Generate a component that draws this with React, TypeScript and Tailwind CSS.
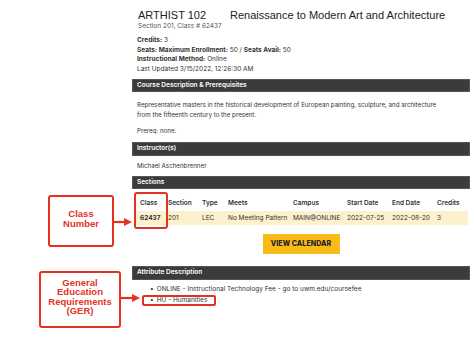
const body = { fontFamily: 'Inter, "Noto Sans", sans-serif' };
const arial = { fontFamily: '"Liberation Sans", Arial, sans-serif' };

function Bar({ title, className = '' }: { title: string; className?: string }) {
  return (
    <div
      className={`h-[13px] bg-[#3b3b3b] border border-[#555] text-white font-semibold text-[6.5px] leading-[11px] pl-[4px] ${className}`}
    >
      {title}
    </div>
  );
}

function Callout({ lines, className, leading }: { lines: string[]; className: string; leading: string }) {
  return (
    <div
      className={`absolute border-2 border-[#e4321f] rounded-[3px] bg-white flex flex-col items-center justify-center text-[#e4321f] font-bold text-[9.5px] text-center ${leading} ${className}`}
      style={arial}
    >
      {lines.map((l) => (
        <div key={l}>{l}</div>
      ))}
    </div>
  );
}

function Arrow({ className }: { className: string }) {
  return (
    <svg className={`absolute ${className}`} width="20" height="10" viewBox="0 0 20 10">
      <line x1="0" y1="5" x2="12" y2="5" stroke="#e4321f" strokeWidth="2.2" />
      <polygon points="11,1 19,5 11,9" fill="#e4321f" />
    </svg>
  );
}

const cols = 'grid grid-cols-[28px_34px_26px_65px_54px_45px_45px_1fr] pl-[6px] mx-[2px]';

export default function App() {
  return (
    <div className="relative w-[474px] h-[339px] overflow-hidden bg-white text-[#333]" style={body}>
      <div className="flex">
        <div className="w-[132px] shrink-0" />
        <div className="w-[338px]">
          <div className="mt-[8px] h-[14px] leading-[14px] pl-[6px] flex text-[11px] text-[#222]" style={arial}>
            <span className="w-[92px]">ARTHIST 102</span>
            <span>Renaissance to Modern Art and Architecture</span>
          </div>
          <div className="pl-[6px] text-[6.5px] leading-[9px] text-[#555]">Section 201, Class # 62437</div>

          <div className="mt-[5px] pl-[5px] text-[6.5px] leading-[9.6px]">
            <div>
              <b>Credits:</b> 3
            </div>
            <div>
              <b>Seats: Maximum Enrollment:</b> 50 / <b>Seats Avail:</b> 50
            </div>
            <div>
              <b>Instructional Method:</b> Online
            </div>
            <div>Last Updated 3/15/2022, 12:26:30 AM</div>
          </div>

          <Bar title="Course Description & Prerequisites" className="mt-[5px]" />
          <div className="mt-[8px] pl-[5px] text-[6.2px] leading-[10px]">
            <div>Representative masters in the historical development of European painting, sculpture, and architecture</div>
            <div>from the fifteenth century to the present.</div>
            <div className="mt-[6px]">Prereq: none.</div>
          </div>

          <Bar title="Instructor(s)" className="mt-[6px] h-[14px]" />
          <div className="mt-[5px] pl-[5px] text-[6.2px] leading-[10px]">Michael Aschenbrenner</div>

          <Bar title="Sections" className="mt-[5px]" />
          <div className="relative mt-[6px] text-[6.5px]">
            <div className={`${cols} h-[16px] items-center font-semibold`}>
              <span>Class</span>
              <span>Section</span>
              <span>Type</span>
              <span>Meets</span>
              <span>Campus</span>
              <span>Start Date</span>
              <span>End Date</span>
              <span>Credits</span>
            </div>
            <div className={`${cols} h-[14px] items-center bg-[#fdf0cd]`}>
              <span className="font-bold">62437</span>
              <span>201</span>
              <span>LEC</span>
              <span className="whitespace-nowrap">No Meeting Pattern</span>
              <span>MAIN@ONLINE</span>
              <span>2022-07-25</span>
              <span>2022-08-20</span>
              <span>3</span>
            </div>
            <div className="absolute left-[2px] top-[-3px] w-[34px] h-[37px] border-2 border-[#e4321f] rounded-[3px]" />
          </div>

          <div className="flex justify-center mt-[9px]">
            <div className="w-[77px] h-[20px] bg-[#f9bb17] flex items-center justify-center text-[7px] font-extrabold text-[#222] tracking-[0.1px]">
              VIEW CALENDAR
            </div>
          </div>

          <Bar title="Attribute Description" className="mt-[12px] h-[14px]" />
          <div className="relative mt-[4px] text-[6.5px] leading-[10.5px] pl-[18px]">
            <div>
              <span className="mr-[3px]">•</span>ONLINE - Instructional Technology Fee - go to uwm.edu/coursefee
            </div>
            <div>
              <span className="mr-[3px]">•</span>HU - Humanities
            </div>
            <div className="absolute left-[10px] top-[11px] w-[74px] h-[11px] border-2 border-[#e4321f] rounded-[2px]" />
          </div>
        </div>
      </div>

      <Callout
        lines={['Class', 'Number']}
        className="left-[48px] top-[195px] w-[66px] h-[52px] pb-[4px]"
        leading="leading-[10px]"
      />
      <Arrow className="left-[113px] top-[217px]" />
      <Callout
        lines={['General', 'Education', 'Requirements', '(GER)']}
        className="left-[39px] top-[271px] w-[82px] h-[57px] pb-[6px]"
        leading="leading-[9.5px]"
      />
      <Arrow className="left-[121px] top-[293px]" />
    </div>
  );
}
